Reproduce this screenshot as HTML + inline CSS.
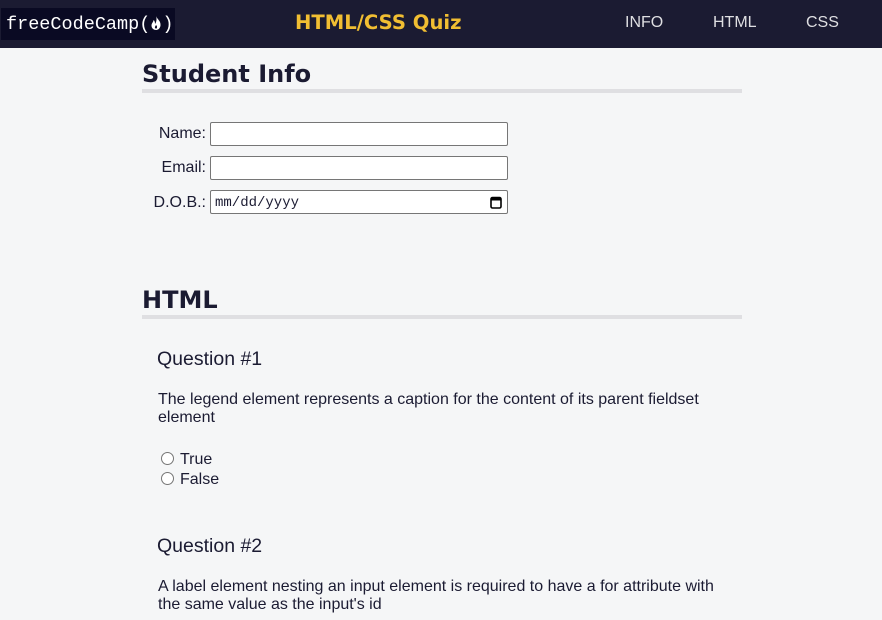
<!DOCTYPE html>
<html><head><style>
body{margin:0;width:882px;height:620px;overflow:hidden;background:#f5f6f7;font-family:"Liberation Sans",sans-serif;color:#1b1b32}
.nav{position:absolute;left:0;top:0;width:882px;height:48px;background:#1b1b32}
.logo{position:absolute;left:1px;top:8px;width:174px;height:32px;background:#0a0a23;color:#fff;font-family:"Liberation Mono",monospace;font-size:18.5px;line-height:33px;padding-left:5px;box-sizing:border-box}
.title{position:absolute;left:295px;top:11px;color:#f1be32;font-family:"DejaVu Sans",sans-serif;font-weight:bold;font-size:19.6px}
.nl{position:absolute;top:14px;color:#dfdfe2;font-size:16px}
h2{position:absolute;left:142px;margin:0;width:600px;font-family:"DejaVu Sans",sans-serif;font-size:24px;border-bottom:4px solid #dfdfe2;line-height:29px}
.lab{position:absolute;font-size:16px;text-align:right;width:66px;left:140px}
.inp{position:absolute;left:210px;width:298px;height:24px;border:1px solid #767676;border-radius:2px;background:#fff;box-sizing:border-box}
.q{position:absolute;left:157px;font-size:19.5px}
.t{position:absolute;left:158px;font-size:16px;line-height:18px;width:560px}
.r{position:absolute;left:161px;font-size:16px}
.r span{display:inline-block;width:11px;height:11px;border:1px solid #767676;border-radius:50%;background:#fff;vertical-align:-1px;margin-right:6px}
</style></head><body>
<div class="nav">
<div class="logo">freeCodeCamp(<svg width="12" height="16" viewBox="0 0 12 16" style="vertical-align:-2px"><path d="M6 1C7 4 11 6 10.5 10.5C10 14 7.5 15 6 15C4 15 1.5 13.5 1.5 10.5C1.5 8 3.5 7 3.5 5C5 6 5 8 5 9C6.5 7 7 4 6 1Z" fill="#fff"/><path d="M6 10C7 11 7.5 12 6.5 13.5C5.5 14 4.5 13 5 11.8Z" fill="#0a0a23"/></svg>)</div>
<div class="title">HTML/CSS Quiz</div>
<div class="nl" style="left:625px">INFO</div>
<div class="nl" style="left:713px">HTML</div>
<div class="nl" style="left:806px">CSS</div>
</div>
<h2 style="top:60px">Student Info</h2>
<div class="lab" style="top:125px">Name:</div><div class="inp" style="top:122px"></div>
<div class="lab" style="top:159px">Email:</div><div class="inp" style="top:156px"></div>
<div class="lab" style="top:194px">D.O.B.:</div><div class="inp" style="top:190px;font-family:'Liberation Mono',monospace;font-size:14px;line-height:24px;padding-left:4px">mm/dd/yyyy<svg style="position:absolute;right:5px;top:5px" width="12" height="13" viewBox="0 0 12 13"><rect x="1" y="1.5" width="10" height="10.5" rx="1.5" fill="none" stroke="#000" stroke-width="1.6"/><rect x="1" y="1.5" width="10" height="3" fill="#000"/></svg></div>
<h2 style="top:286px">HTML</h2>
<div class="q" style="top:348px">Question #1</div>
<div class="t" style="top:391px">The legend element represents a caption for the content of its parent fieldset element</div>
<div class="r" style="top:451px"><span></span>True</div>
<div class="r" style="top:471px"><span></span>False</div>
<div class="q" style="top:535px">Question #2</div>
<div class="t" style="top:578px">A label element nesting an input element is required to have a for attribute with the same value as the input's id</div>
</body></html>
